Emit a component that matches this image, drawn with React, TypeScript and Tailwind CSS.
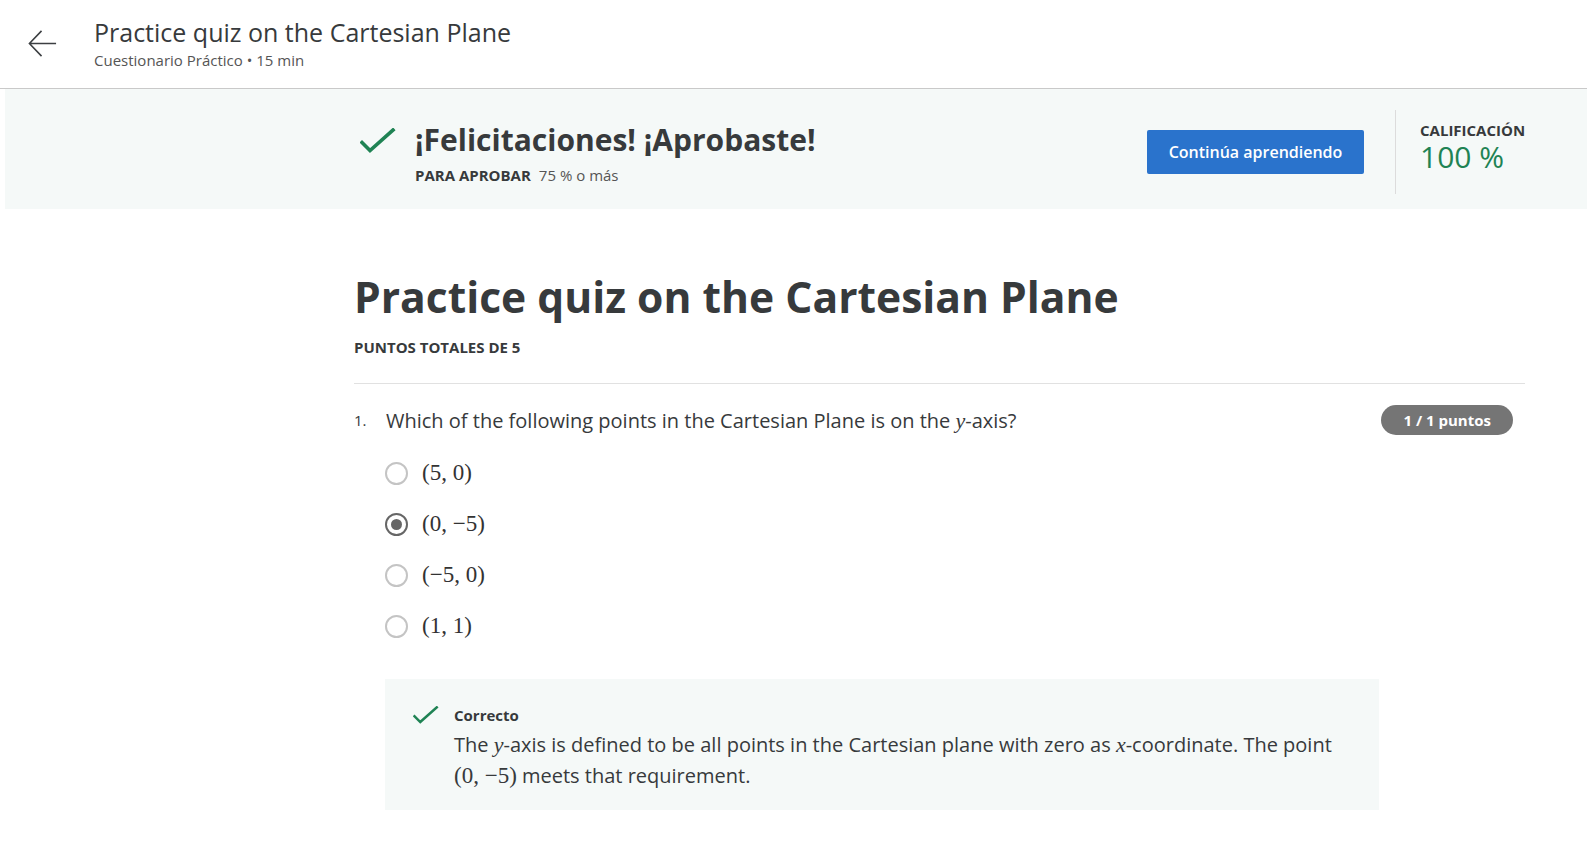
import React from 'react';

const sans = { fontFamily: '"Open Sans", "Noto Sans", sans-serif' };
const math = 'font-["Liberation_Serif",serif]';

function Check({ className }: { className?: string }) {
  return (
    <svg className={className} viewBox="0 0 36 28" fill="none">
      <path
        d="M2 14.5 10 22.5 33 2"
        stroke="#1f8354"
        strokeWidth="3.6"
        strokeLinecap="square"
      />
    </svg>
  );
}

function Radio({ checked }: { checked?: boolean }) {
  return (
    <span
      className={
        checked
          ? 'flex size-[23px] items-center justify-center rounded-full border-[2.5px] border-[#666]'
          : 'flex size-[23px] items-center justify-center rounded-full border-2 border-[#c4c4c4]'
      }
    >
      {checked ? <span className="size-[11px] rounded-full bg-[#666]" /> : null}
    </span>
  );
}

const options = [
  { label: '(5, 0)', checked: false },
  { label: '(0, −5)', checked: true },
  { label: '(−5, 0)', checked: false },
  { label: '(1, 1)', checked: false },
];

export default function App() {
  return (
    <div className="min-h-[861px] bg-white text-[#373a3c]" style={sans}>
      {/* header */}
      <header className="flex h-[89px] items-center border-b border-[#c9c9c9]">
        <button className="ml-[27px] mt-[-2px] flex size-[31px] items-center justify-center" type="button">
          <svg viewBox="0 0 32 32" className="size-[31px]" fill="none">
            <path d="M30 16H3M15 3 2.5 16 15 29" stroke="#3c3f42" strokeWidth="1.6" />
          </svg>
        </button>
        <div className="ml-[36px] -mt-[2px] flex flex-col">
          <h1 className="text-[25px] leading-[32px] text-[#373a3c]">Practice quiz on the Cartesian Plane</h1>
          <p className="mt-[2px] text-[15px] leading-[20px] text-[#555]">Cuestionario Práctico • 15 min</p>
        </div>
      </header>

      {/* banner */}
      <section className="ml-[5px] flex h-[120px] items-center bg-[#f5f9f8] pt-[6px]">
        <div className="ml-[355px] flex w-[1165px] items-center">
          <Check className="mt-[-20px] h-[28px] w-[36px] shrink-0" />
          <div className="ml-[19px] flex flex-col">
            <h2 className="text-[30px] font-bold leading-[40px] text-[#373a3c]">¡Felicitaciones! ¡Aprobaste!</h2>
            <p className="mt-[5px] text-[15px] leading-[20px]">
              <span className="font-bold">PARA APROBAR</span>
              <span className="ml-[8px] text-[#555]">75 % o más</span>
            </p>
          </div>
          <button
            type="button"
            className="ml-auto h-[44px] w-[217px] rounded-[2px] bg-[#2a73cc] text-[16px] font-semibold text-white"
          >
            Continúa aprendiendo
          </button>
          <div className="ml-[31px] h-[84px] w-px bg-[#dcdcdc]" />
          <div className="ml-[24px] mt-[-12px] flex w-[105px] flex-col">
            <span className="text-[15px] font-bold leading-[22px] text-[#373a3c]">CALIFICACIÓN</span>
            <span className="text-[30px] leading-[32px] text-[#1f8354]">100 %</span>
          </div>
        </div>
      </section>

      {/* main */}
      <main className="ml-[354px] w-[1171px]">
        <h1 className="mt-[59px] text-[42.6px] font-bold leading-[56px] text-[#373a3c]">
          Practice quiz on the Cartesian Plane
        </h1>
        <p className="mt-[13px] text-[15px] font-bold leading-[20px]">PUNTOS TOTALES DE 5</p>
        <div className="mt-[26px] h-px bg-[#e1e1e1]" />

        <div className="mt-[23px] flex items-start">
          <span className="w-[32px] pt-[1px] text-[15px] leading-[24px]">1.</span>
          <p className="text-[20px] leading-[28px]">
            Which of the following points in the Cartesian Plane is on the{' '}
            <span className={`${math} text-[22px] italic`}>y</span>-axis?
          </p>
          <span className="ml-auto mr-[12px] mt-[-2px] rounded-full bg-[#757575] px-[22px] text-[15px] font-bold leading-[30px] text-white">
            1 / 1 puntos
          </span>
        </div>

        <ul className="ml-[31px] mt-[24px] flex flex-col gap-[23px]">
          {options.map((o) => (
            <li key={o.label} className="flex h-[28px] items-center">
              <Radio checked={o.checked} />
              <span className={`${math} ml-[14px] text-[23px] leading-[28px] text-[#333]`}>{o.label}</span>
            </li>
          ))}
        </ul>

        <div className="ml-[31px] mt-[39px] flex h-[131px] w-[994px] bg-[#f5f9f8] pl-[28px] pt-[26px]">
          <Check className="mt-[1px] h-[20px] w-[26px] shrink-0" />
          <div className="ml-[15px] flex flex-col">
            <span className="text-[15px] font-bold leading-[20px] text-[#373a3c]">Correcto</span>
            <p className="mt-[4px] text-[20px] leading-[31px] text-[#373a3c]">
              The <span className={`${math} text-[22px] italic`}>y</span>-axis is defined to be all points in the
              Cartesian plane with zero as <span className={`${math} text-[22px] italic`}>x</span>-coordinate. The
              point <br />
              <span className={`${math} text-[23px]`}>(0, −5)</span> meets that requirement.
            </p>
          </div>
        </div>
      </main>
    </div>
  );
}
